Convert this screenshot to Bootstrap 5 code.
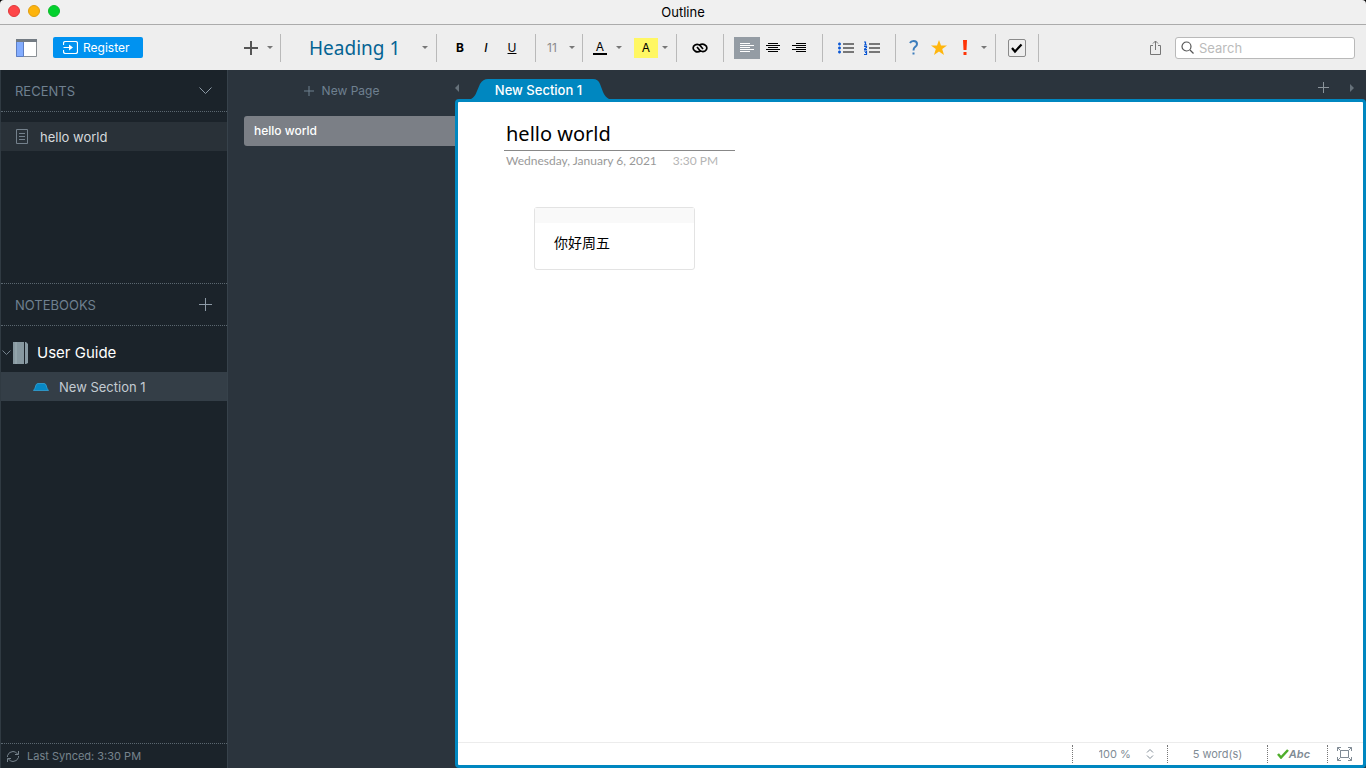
<!DOCTYPE html>
<html lang="en">
<head>
<meta charset="utf-8">
<meta name="viewport" content="width=device-width, initial-scale=1">
<title>Outline</title>
<link href="https://cdn.jsdelivr.net/npm/bootstrap@5.3.0/dist/css/bootstrap.min.css" rel="stylesheet">
<script src="https://cdn.jsdelivr.net/npm/bootstrap@5.3.0/dist/js/bootstrap.bundle.min.js" defer></script>
<style>
:root { --accent: #0087c0; --panel: #1b232a; --pane: #2b343d; --muted: #6f8090; }
body { font-family: Inter, "Noto Sans CJK SC", sans-serif; font-size: 13px; line-height: 16px; background: #000; color: #000; }
button, input, select { font: inherit; }
button { background: none; border: 0; padding: 0; color: inherit; }
a { color: inherit; text-decoration: none; }
svg { display: block; flex: none; }
.titlebar { height: 25px; background: #f0f0f0; border-bottom: 1px solid #ababab; border-radius: 4px 4px 0 0; }
.lights { left: 8px; top: 5px; gap: 8px; }
.lights button { width: 12px; height: 12px; border-radius: 50%; border: 1px solid #e0383a; background: #fe4648; }
.lights .amber { background: #fdb40c; border-color: #e19d10; }
.lights .green { background: #02d12d; border-color: #0dba2c; }
.toolbar { height: 45px; background: #eee; }
.tools-left { width: 228px; padding-left: 16px; gap: 16px; }
.register { height: 21px; background: #0092f0; color: #fff; border-radius: 2px; font-size: 12px; padding: 0 14px 0 10px; gap: 5px; }
.tool-group { height: 28px; border-right: 1px solid #b9b9b9; padding: 0 10px; }
.tool-group.tight { padding: 0 5px 0 4px; }
.tool-group.single { padding: 0 12px; }
.tool { width: 26px; height: 22px; display: flex; align-items: center; justify-content: center; }
.tool.active { background: #949ca4; color: #fff; }
.more { width: 12px; height: 22px; display: flex; align-items: center; justify-content: center; color: #777; }
.more::after { content: ""; border: 3px solid transparent; border-top-color: currentColor; border-bottom: 0; }
.picker { appearance: none; border: 0; background: url("data:image/svg+xml,%3Csvg xmlns='http://www.w3.org/2000/svg' width='6' height='3'%3E%3Cpath d='M0 0h6L3 3z' fill='%23777'/%3E%3C/svg%3E") no-repeat right 8px center; }
.style-picker { width: 155px; height: 28px; line-height: 28px; padding: 0 0 0 28px; font-family: "Noto Sans", sans-serif; font-size: 19px; color: #046393; }
.size-picker { width: 46px; height: 22px; padding: 0 0 0 11px; font-size: 12px; color: #8b8b8b; background-position: right 7px center; }
.text-tool { font-size: 12px; }
.ink span { border-bottom: 2px solid #000; width: 14px; line-height: 13px; height: 15px; }
.marker span { background: #fff763; width: 24px; height: 20px; line-height: 20px; }
.check { appearance: none; width: 18px; height: 18px; margin: 0; border: 1px solid #8a8a8a; border-radius: 2px; background: url("data:image/svg+xml,%3Csvg xmlns='http://www.w3.org/2000/svg' width='16' height='16'%3E%3Cpath d='M3 8l3 3.500L12.500 4.500' fill='none' stroke='%23000' stroke-width='2.200'/%3E%3C/svg%3E") center no-repeat; }
.search { width: 180px; height: 22px; margin-right: 11px; background: #fff; border: 1px solid #b9b9b9; border-radius: 3px; padding: 0 5px; gap: 5px; color: #555; }
.search input { border: 0; outline: 0; padding: 0; min-width: 0; flex: 1; background: none; }
.search input::placeholder { color: #bbb; opacity: 1; }
.side { width: 228px; background: var(--panel); border-left: 1px solid #303a42; border-right: 1px solid #37424b; color: #d5d9dc; }
.side-head { height: 42px; padding: 0 15px 0 14px; color: var(--muted); border-bottom: 1px dotted #5b6770; }
.side-head h2 { font-size: 13px; line-height: 16px; font-weight: 400; margin: 0; }
.recents { height: 172px; padding-top: 10px; border-bottom: 1px dotted #5b6770; }
.side-row { height: 29px; background: #293138; padding-left: 15px; gap: 12px; }
.notebook { height: 30px; margin: 12px 0 4px; font-size: 15px; line-height: 20px; color: #fff; padding-left: 1px; gap: 8px; }
.section-row { height: 29px; background: #343e47; padding-left: 32px; gap: 10px; color: #c3cbd2; }
.sync { height: 25px; border-top: 1px dotted #5b6770; color: #77838d; font-size: 11px; padding-left: 5px; gap: 7px; }
.pages { width: 227px; background: var(--pane); }
.new-page { height: 41px; color: var(--muted); font-size: 12px; gap: 8px; }
.page-card { height: 30px; margin: 5px 0 0 16px; padding-left: 10px; background: #7b7f86; color: #fff; border-radius: 3px 0 0 3px; font-size: 12px; font-weight: 500; }
.work { background: var(--pane); min-width: 0; }
.tabs { height: 29px; color: #66717a; }
.tabs .step { padding-top: 6px; }
.section-tab { width: 138px; height: 20px; margin-left: 11px; color: #fff; font-weight: 500; background: url("data:image/svg+xml,%3Csvg xmlns='http://www.w3.org/2000/svg' width='138' height='20'%3E%3Cpath d='M0 20Q4 18 6 12L9 5Q12 0 17 0H122Q127 0 129 5L132 13Q134 18 138 20z' fill='%230087c0'/%3E%3C/svg%3E") no-repeat; padding: 2px 3px 0 0; }
.sheet { border: 3px solid var(--accent); border-radius: 4px; background: #fff; min-height: 0; }
.note-title { font-family: "Noto Sans", sans-serif; font-size: 20px; line-height: 27px; width: 231px; height: 33px; margin: 16px 0 0 46px; border: 0; border-bottom: 1px solid #888; padding: 0 2px 2px; outline: 0; }
.stamp { font-family: Lato, sans-serif; font-size: 12px; color: #999; margin: 2px 0 0 48px; gap: 16px; }
.stamp .hour { color: #b5b5b5; }
.note-box { width: 161px; height: 63px; margin: 38px 0 0 76px; border: 1px solid #e3e3e3; border-radius: 3px; font-size: 14px; line-height: 20px; }
.note-grip { height: 15px; background: #f9f9f9; }
.note-box p { margin: 0; padding: 10px 19px; }
.status { height: 23px; border-top: 1px solid #ececec; color: #808b95; font-size: 11px; }
.status > * { height: 18px; border-left: 1px dotted #777; display: flex; align-items: center; justify-content: center; }
.zoom-cell { width: 95px; }
.zoom-cell select { width: 58px; padding: 0; border: 0; background: url("data:image/svg+xml,%3Csvg xmlns='http://www.w3.org/2000/svg' width='8' height='10'%3E%3Cpath d='M1 3.500l3-3 3 3M1 6.500l3 3 3-3' fill='none' stroke='%23808b95'/%3E%3C/svg%3E") no-repeat right 3px center; appearance: none; color: inherit; margin-left: 15px; }
.words { width: 100px; }
.spell { width: 60px; padding-right: 8px; }
.spell b { font-style: italic; font-weight: 600; }
.full { width: 36px; padding-right: 2px; }
</style>
</head>
<body>
<div class="d-flex flex-column vh-100">
  <header class="titlebar position-relative d-flex align-items-center justify-content-center">
    <div class="lights position-absolute d-flex">
      <button aria-label="Close"></button><button class="amber" aria-label="Minimize"></button><button class="green" aria-label="Zoom"></button>
    </div>
    <span>Outline</span>
  </header>

  <div class="toolbar d-flex align-items-center">
    <div class="tools-left d-flex align-items-center">
      <button aria-label="Toggle sidebar"><svg width="21" height="18"><path d="M.5.5h20v17H.5z" fill="#fff" stroke="#8b9095"/><path d="M.5 2.500h7v15h-7z" fill="#84adff" stroke="#5d7fc5"/><path d="M0 0h21v3H0z" fill="#737b83"/></svg></button>
      <button class="register d-flex align-items-center"><svg width="15" height="13" fill="none" stroke="#fff"><path d="M.5 4V2.500Q.5.5 2.500.5h10q2 0 2 2v8q0 2-2 2h-10q-2 0-2-2V9M.5 6.500h7" stroke-width="1.200"/><path d="M6 3.500v6l4-3z" fill="#fff" stroke="none"/></svg>Register</button>
    </div>
    <div class="tool-group d-flex align-items-center pe-1"><button class="tool" aria-label="Add"><svg width="14" height="14"><path d="M7 0v14M0 7h14" stroke="#555" stroke-width="2"/></svg></button><button class="more" aria-label="Add options"></button></div>
    <div class="tool-group d-flex align-items-center px-0"><select class="picker style-picker" aria-label="Text style"><option>Heading 1</option></select></div>
    <div class="tool-group d-flex align-items-center text-tool"><button class="tool fw-bold">B</button><button class="tool fst-italic fw-medium">I</button><button class="tool text-decoration-underline">U</button></div>
    <div class="tool-group d-flex align-items-center px-0"><select class="picker size-picker" aria-label="Font size"><option>11</option></select></div>
    <div class="tool-group tight d-flex align-items-center text-tool"><button class="tool ink" aria-label="Text color"><span>A</span></button><button class="more" aria-label="Text colors"></button><button class="tool marker ms-2" aria-label="Highlight"><span>A</span></button><button class="more" aria-label="Highlight colors"></button></div>
    <div class="tool-group d-flex align-items-center"><button class="tool" aria-label="Link"><svg width="16" height="10" fill="none" stroke="#000" stroke-width="1.700"><path d="M8.500 8C6.500 9.300 4.500 9.200 3 8 .5 6.500.5 3.500 3 2c2-1 4-.5 5.500 1l2.500 3M7.500 2C9.500.7 11.500.8 13 2c2.500 1.500 2.500 4.500 0 6-2 1-4 .5-5.500-1L5 4"/></svg></button></div>
    <div class="tool-group d-flex align-items-center">
      <button class="tool active" aria-label="Align left"><svg width="14" height="9" stroke="currentColor"><path d="M0 .5h10M0 2.500h14M0 4.500h10M0 6.500h14M0 8.500h10"/></svg></button>
      <button class="tool" aria-label="Align center"><svg width="14" height="9" stroke="currentColor"><path d="M2 .5h10M0 2.500h14M2 4.500h10M0 6.500h14M2 8.500h10"/></svg></button>
      <button class="tool" aria-label="Align right"><svg width="14" height="9" stroke="currentColor"><path d="M4 .5h10M0 2.500h14M4 4.500h10M0 6.500h14M4 8.500h10"/></svg></button>
    </div>
    <div class="tool-group d-flex align-items-center">
      <button class="tool" aria-label="Bulleted list"><svg width="16" height="12"><path d="M5 2h11M5 6h11M5 10h11" stroke="#000" stroke-width="1.200"/><path d="M0 2h3M1.500 .5v3M0 6h3M1.500 4.500v3M0 10h3M1.500 8.500v3" stroke="#0b57d4" stroke-width="1.500"/></svg></button>
      <button class="tool" aria-label="Numbered list"><svg width="16" height="14"><path d="M5 3h11M5 7h11M5 11h11" stroke="#000" stroke-width="1.200"/><path d="M0 1h1.500V4M0 4h3M0 5.500h2.500v1L.5 8v.5H3M0 10h2.500v3.500H0M1 11.500h1.500" fill="none" stroke="#0b57d4" stroke-width="1.200"/></svg></button>
    </div>
    <div class="tool-group tight d-flex align-items-center">
      <button class="tool" aria-label="Question tag"><svg width="9" height="15"><path d="M1 3Q2 1 4.500 1 8 1 8 4q0 2-2 3Q4.500 8 4.500 10.500" fill="none" stroke="#3c7dbc" stroke-width="2"/><path d="M3.500 12.500h2v2h-2z" fill="#3c7dbc"/></svg></button>
      <button class="tool" aria-label="Star tag"><svg width="16" height="15"><path d="M8 0l2 5.500h6l-4.800 3.500 1.800 6-5-3.600L3 15l1.800-6L0 5.500h6z" fill="#ffb60d"/></svg></button>
      <button class="tool" aria-label="Important tag"><svg width="4" height="15"><path d="M0 0h4l-.5 10h-3zM.5 12h3v3h-3z" fill="#ff3407"/></svg></button>
      <button class="more" aria-label="More tags"></button>
    </div>
    <div class="tool-group single d-flex align-items-center"><input class="check" type="checkbox" checked aria-label="Checkbox"></div>
    <button class="ms-auto" style="" aria-label="Share"><svg width="25" height="16" fill="none" stroke="#777"><path d="M3 5.500H.5v9h10v-9H8M5.500 10V1M3 3.500L5.500 1 8 3.500"/></svg></button>
    <label class="search d-flex align-items-center"><svg width="13" height="13" fill="none" stroke="currentColor" stroke-width="1.200"><circle cx="5.500" cy="5.500" r="4.500"/><path d="M9 9l3.500 3.500"/></svg><input type="text" placeholder="Search" aria-label="Search"></label>
  </div>

  <div class="d-flex flex-grow-1 overflow-hidden">
    <aside class="side d-flex flex-column flex-shrink-0">
      <div class="side-head d-flex align-items-center justify-content-between"><h2>RECENTS</h2><button aria-label="Collapse recents"><svg width="13" height="8" fill="none" stroke="#8d9aa6"><path d="M.5.5l6 6 6-6"/></svg></button></div>
      <div class="recents">
        <a href="#" class="side-row d-flex align-items-center"><svg width="12" height="15" fill="none" stroke="#74818c"><path d="M.5.5h11v14H.5zM3 4.500h6M3 7.500h6M3 10.500h6"/></svg>hello world</a>
      </div>
      <div class="side-head d-flex align-items-center justify-content-between"><h2>NOTEBOOKS</h2><button aria-label="Add notebook"><svg width="13" height="13"><path d="M6.500 0v13M0 6.500h13" stroke="#8d9aa6"/></svg></button></div>
      <a href="#" class="notebook d-flex align-items-center"><span class="d-flex align-items-center"><svg width="11" height="6" fill="none" stroke="#74818c"><path d="M.5.5l4 4 4-4"/></svg><svg width="16" height="22"><path d="M0 0h11v22H0z" fill="#8798a0"/><path d="M3 0v22" stroke="#9eafb5"/><path d="M12 0h1l2 2v19l-2 1h-1z" fill="#899aa3"/></svg></span>User Guide</a>
      <a href="#" class="section-row d-flex align-items-center"><svg width="16" height="8"><path d="M.5 7.500Q2 6 3 2q.5-1.500 2-1.500h6q1.500 0 2 1.500 1 4 2.500 5.500z" fill="#0788c5" stroke="#32a2d6" stroke-width=".8"/></svg>New Section 1</a>
      <div class="sync d-flex align-items-center mt-auto"><svg width="14" height="13" fill="none" stroke="currentColor"><path d="M1.500 7V5.500Q3 1.500 7 1.500q3 0 4.500 2.500M12.500 1v3.500H9M12.500 6v1.500q-1.500 4-5.500 4-3 0-4.500-2.500M1.500 12V8.500H5"/></svg>Last Synced: 3:30 PM</div>
    </aside>

    <nav class="pages flex-shrink-0" aria-label="Pages">
      <button class="new-page d-flex align-items-center justify-content-center w-100"><svg width="10" height="10"><path d="M5 0v10M0 5h10" stroke="currentColor"/></svg>New Page</button>
      <a href="#" class="page-card d-flex align-items-center">hello world</a>
    </nav>

    <main class="work d-flex flex-column flex-grow-1">
      <div class="tabs d-flex align-items-center">
        <button class="step" aria-label="Previous section"><svg width="5" height="8"><path d="M4 0v8L0 4z" fill="currentColor"/></svg></button>
        <button class="section-tab align-self-end">New Section 1</button>
        <button class="step ms-auto" aria-label="Add section"><svg width="11" height="11"><path d="M5.500 0v11M0 5.500h11" stroke="#8b949b"/></svg></button>
        <button class="step mx-3 ps-1 me-2" aria-label="Next section"><svg width="9" height="8"><path d="M1 0v8l4-4z" fill="currentColor"/></svg></button>
      </div>
      <div class="sheet d-flex flex-column flex-grow-1">
        <article class="flex-grow-1">
          <input class="note-title d-block" type="text" value="hello world" aria-label="Page title">
          <div class="stamp d-flex"><span>Wednesday, January 6, 2021</span><span class="hour">3:30 PM</span></div>
          <div class="note-box"><div class="note-grip"></div><p lang="zh">你好周五</p></div>
        </article>
        <footer class="status d-flex align-items-center justify-content-end">
          <div class="zoom-cell"><select aria-label="Zoom"><option>100 %</option></select></div>
          <div class="words">5 word(s)</div>
          <button class="spell" aria-label="Spell check"><svg width="12" height="10"><path d="M1 5l3 3.500L11 1" fill="none" stroke="#4fae2b" stroke-width="2.500"/></svg><b>Abc</b></button>
          <button class="full" aria-label="Full screen"><svg width="15" height="14" fill="none" stroke="#808b95"><path d="M3.500 3.500h8v7h-8zM.5 4V.5H4M11 .5h3.500V4M14.500 10v3.500H11M4 13.500H.5V10M.5.5l3 3M14.500.5l-3 3M14.500 13.500l-3-3M.5 13.500l3-3"/></svg></button>
        </footer>
      </div>
    </main>
  </div>
</div>
</body>
</html>
